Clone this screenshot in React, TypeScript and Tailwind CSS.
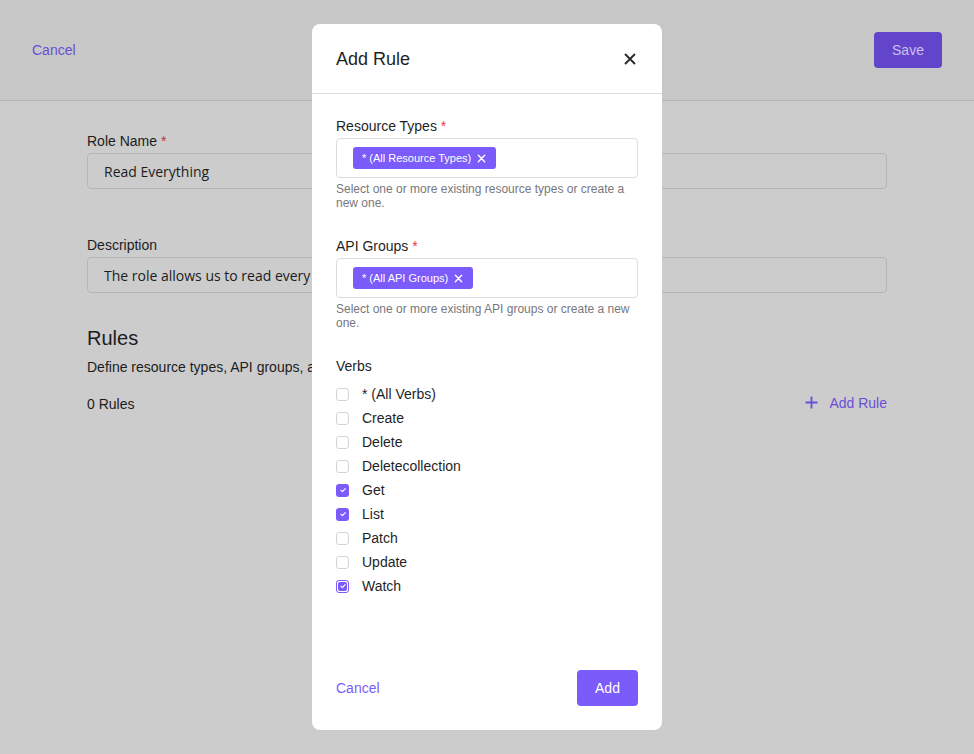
import React from "react";

const PURPLE = "#7b5cfa";

function Chip({ label }: { label: string }) {
  return (
    <span className="inline-flex h-[22px] items-center gap-[6px] rounded-[3px] bg-[#7b5cfa] pl-[9px] pr-[10px] text-[11px] text-white">
      {label}
      <svg width="9" height="9" viewBox="0 0 10 10" fill="none" stroke="white" strokeWidth="1.6" strokeLinecap="round">
        <path d="M1.5 1.5l7 7M8.5 1.5l-7 7" />
      </svg>
    </span>
  );
}

function Check({ state }: { state: "off" | "on" | "focus" }) {
  const tick = (
    <svg width="8" height="8" viewBox="0 0 10 10" fill="none" stroke="white" strokeWidth="1.4" strokeLinecap="round" strokeLinejoin="round">
      <path d="M2.5 5.3l1.8 1.7 3.4-3.8" />
    </svg>
  );
  if (state === "off")
    return <span className="block h-[13px] w-[13px] rounded-[3px] border border-[#d4d4d8] bg-white" />;
  if (state === "on")
    return (
      <span className="flex h-[13px] w-[13px] items-center justify-center rounded-[3px] bg-[#7b5cfa]">{tick}</span>
    );
  return (
    <span className="flex h-[13px] w-[13px] items-center justify-center rounded-[3px] border border-[#7b5cfa] bg-white p-[1px]">
      <span className="flex h-full w-full items-center justify-center rounded-[2px] bg-[#7b5cfa]">{tick}</span>
    </span>
  );
}

const verbs: { name: string; state: "off" | "on" | "focus" }[] = [
  { name: "* (All Verbs)", state: "off" },
  { name: "Create", state: "off" },
  { name: "Delete", state: "off" },
  { name: "Deletecollection", state: "off" },
  { name: "Get", state: "on" },
  { name: "List", state: "on" },
  { name: "Patch", state: "off" },
  { name: "Update", state: "off" },
  { name: "Watch", state: "focus" },
];

export default function App() {
  return (
    <div
      className="relative h-[754px] w-full overflow-hidden bg-[#cccccc] text-[#1c1c1c]"
      style={{ fontFamily: '"Liberation Sans", Arial, sans-serif' }}
    >
      {/* page header */}
      <div className="flex h-[101px] items-center justify-between border-b border-[#b4b5b9] bg-[#c6c7c6] px-[32px]">
        <span className="text-[14px] text-[#6a4fd6]">Cancel</span>
        <button className="h-[36px] w-[68px] rounded-[4px] bg-[#6345cc] text-[14px] text-[#c9c0ee]">Save</button>
      </div>

      {/* page content */}
      <div className="mx-auto w-[800px] pt-[32px]">
        <div className="text-[14px] leading-[16px]">
          Role Name <span className="text-[#c03048]">*</span>
        </div>
        <div
          className="mt-[4px] flex h-[36px] items-center rounded-[4px] border border-[#b5b5b5] px-[16px] text-[14px]"
          style={{ fontFamily: '"Open Sans", sans-serif' }}
        >
          Read Everything
        </div>

        <div className="mt-[48px] text-[14px] leading-[16px]">Description</div>
        <div
          className="mt-[4px] flex h-[36px] items-center rounded-[4px] border border-[#b5b5b5] px-[16px] text-[14px]"
          style={{ fontFamily: '"Open Sans", sans-serif' }}
        >
          The role allows us to read every resource
        </div>

        <div className="mt-[33px] text-[20px] leading-[24px]">Rules</div>
        <div className="mt-[9px] text-[14px] leading-[16px]">
          Define resource types, API groups, and verbs for this role.
        </div>
        <div className="mt-[21px] flex items-center justify-between text-[14px] leading-[16px]">
          <span>0 Rules</span>
          <span className="-mt-[3px] flex items-center gap-[11px] text-[#6a4fd6]">
            <svg width="13" height="13" viewBox="0 0 13 13" fill="none" stroke="#6a4fd6" strokeWidth="1.8">
              <path d="M6.5 0.5v12M0.5 6.5h12" />
            </svg>
            Add Rule
          </span>
        </div>
      </div>

      {/* modal */}
      <div className="absolute left-[312px] top-[24px] flex h-[706px] w-[350px] flex-col rounded-[8px] bg-white text-[#1f1f1f]">
        <div className="flex h-[70px] shrink-0 items-center justify-between border-b border-[#dcdcdf] pl-[24px] pr-[26px]">
          <span className="pt-[2px] text-[18px]">Add Rule</span>
          <svg width="12" height="12" viewBox="0 0 12 12" fill="none" stroke="#2a2a2e" strokeWidth="1.9">
            <path d="M1 1l10 10M11 1L1 11" />
          </svg>
        </div>

        <div className="flex-1 px-[24px] pt-[24px]">
          <div className="text-[14px] leading-[16px]">
            Resource Types <span className="text-[#e0364f]">*</span>
          </div>
          <div className="mt-[4px] flex h-[40px] items-center rounded-[4px] border border-[#dcdcdf] px-[16px]">
            <Chip label="* (All Resource Types)" />
          </div>
          <div className="mt-[4px] text-[12px] leading-[14px] text-[#77777c]">
            Select one or more existing resource types or create a new one.
          </div>

          <div className="mt-[28px] text-[14px] leading-[16px]">
            API Groups <span className="text-[#e0364f]">*</span>
          </div>
          <div className="mt-[4px] flex h-[40px] items-center rounded-[4px] border border-[#dcdcdf] px-[16px]">
            <Chip label="* (All API Groups)" />
          </div>
          <div className="mt-[4px] text-[12px] leading-[14px] text-[#77777c]">
            Select one or more existing API groups or create a new one.
          </div>

          <div className="mt-[28px] text-[14px] leading-[16px]">Verbs</div>
          <div className="mt-[8px] flex flex-col">
            {verbs.map((v) => (
              <div key={v.name} className="flex h-[24px] items-center gap-[13px] text-[14px]">
                <Check state={v.state} />
                <span>{v.name}</span>
              </div>
            ))}
          </div>
        </div>

        <div className="flex shrink-0 items-center justify-between px-[24px] pb-[24px]">
          <span className="text-[14px]" style={{ color: PURPLE }}>Cancel</span>
          <button className="h-[36px] w-[61px] rounded-[4px] bg-[#7b5cfa] text-[14px] text-white">Add</button>
        </div>
      </div>
    </div>
  );
}
